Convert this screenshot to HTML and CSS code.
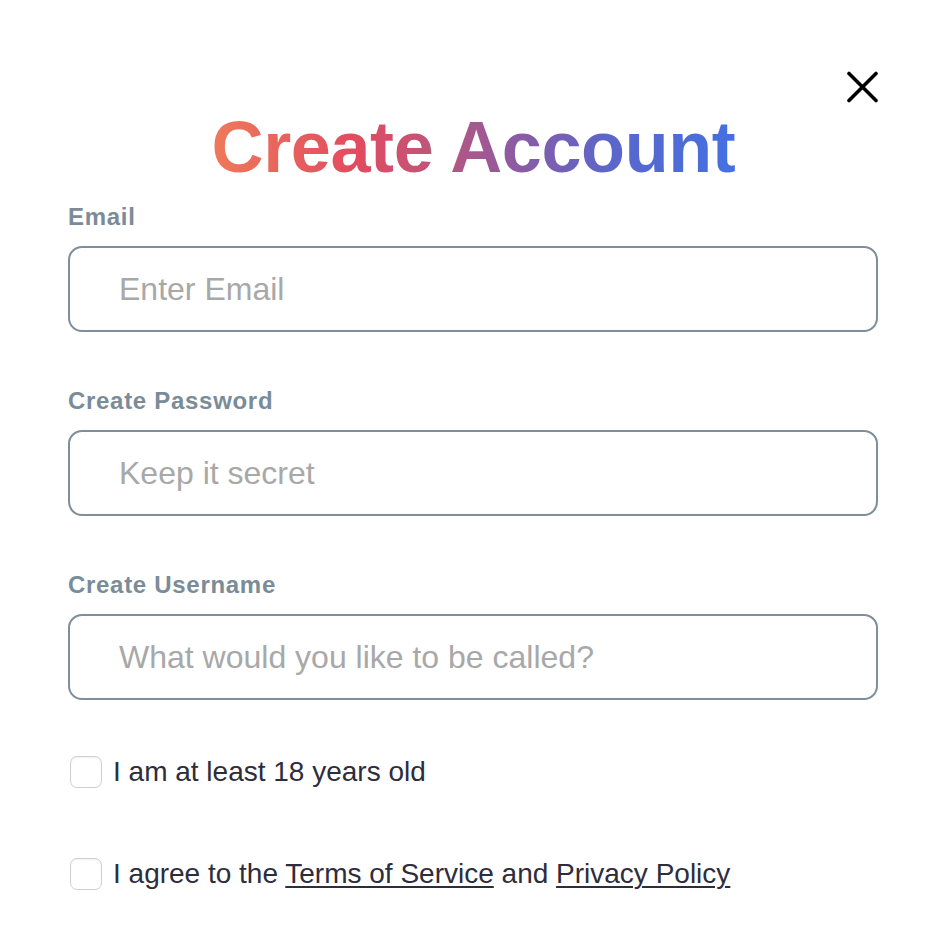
FILE: index.html
```html
<!DOCTYPE html>
<html lang="en">
<head>
<meta charset="utf-8">
<title>Create Account</title>
<link rel="stylesheet" href="styles.css">
</head>
<body>
<div class="modal">
  <button class="close" aria-label="Close">
    <svg width="32" height="32" viewBox="0 0 32 32"><path d="M3 2.5 L30 29.5 M30 2.5 L3 29.5" stroke="#000" stroke-width="3.6" stroke-linecap="round" fill="none"/></svg>
  </button>
  <h1 class="title"><span class="grad">Create Account</span></h1>
  <form class="form">
    <div class="field">
      <label class="label">Email</label>
      <input class="input" type="text" placeholder="Enter Email">
    </div>
    <div class="field">
      <label class="label">Create Password</label>
      <input class="input" type="password" placeholder="Keep it secret">
    </div>
    <div class="field">
      <label class="label">Create Username</label>
      <input class="input" type="text" placeholder="What would you like to be called?">
    </div>
    <label class="check">
      <input class="box" type="checkbox">
      <span>I am at least 18 years old</span>
    </label>
    <label class="check">
      <input class="box" type="checkbox">
      <span>I agree to the <a href="#">Terms of Service</a> and <a href="#">Privacy Policy</a></span>
    </label>
  </form>
</div>
</body>
</html>
```

FILE: styles.css
```css
html, body {
  margin: 0;
  padding: 0;
  background: #fff;
}
body {
  font-family: "Liberation Sans", Arial, Helvetica, sans-serif;
  width: 952px;
  height: 934px;
  overflow: hidden;
}
.modal {
  position: relative;
  padding: 107px 74px 0 68px;
}
.close {
  position: absolute;
  top: 71px;
  right: 74px;
  width: 32px;
  height: 32px;
  padding: 0;
  border: 0;
  background: none;
  cursor: pointer;
}
.close svg { display: block; }
.title {
  margin: 0;
  text-align: center;
  font-size: 72px;
  line-height: 80px;
  font-weight: 700;
  letter-spacing: -0.4px;
  padding-left: 1px;
}
.grad {
  display: inline-block;
  background: linear-gradient(90deg, #ee7a5a 0%, #e24a60 28%, #c0557a 42%, #8f5aa0 57%, #5b66cb 76%, #4470e2 100%);
  -webkit-background-clip: text;
  background-clip: text;
  color: transparent;
}
.form {
  display: flex;
  flex-direction: column;
  margin-top: 16px;
}
.field {
  display: flex;
  flex-direction: column;
  gap: 15px;
  margin-bottom: 55px;
}
.label {
  font-size: 24px;
  line-height: 28px;
  font-weight: 700;
  letter-spacing: 0.7px;
  color: #7a8c98;
}
.input {
  box-sizing: border-box;
  width: 810px;
  height: 86px;
  margin: 0;
  border: 2px solid #7e8e9a;
  border-radius: 14px;
  padding: 0 20px 0 49px;
  font-family: "Liberation Sans", Arial, Helvetica, sans-serif;
  font-size: 32px;
  color: #333;
  background: #fff;
  outline: none;
}
.input::placeholder {
  color: #a8a8a8;
}
.field:last-of-type { margin-bottom: 56px; }
.check {
  display: flex;
  align-items: center;
  gap: 11px;
  height: 32px;
  padding-left: 2px;
  margin-bottom: 70px;
  font-size: 28px;
  line-height: 32px;
  color: #2d2d3b;
}
.box {
  appearance: none;
  -webkit-appearance: none;
  box-sizing: border-box;
  width: 32px;
  height: 32px;
  margin: 0;
  border: 1px solid #cfcfcf;
  border-radius: 7px;
  background: #fff;
  box-shadow: inset 0 1px 2px rgba(0,0,0,0.06);
  flex: none;
}
.check a {
  color: #2d2d3b;
  text-decoration: underline;
  text-underline-offset: 3px;
  text-decoration-thickness: 2px;
}
```
